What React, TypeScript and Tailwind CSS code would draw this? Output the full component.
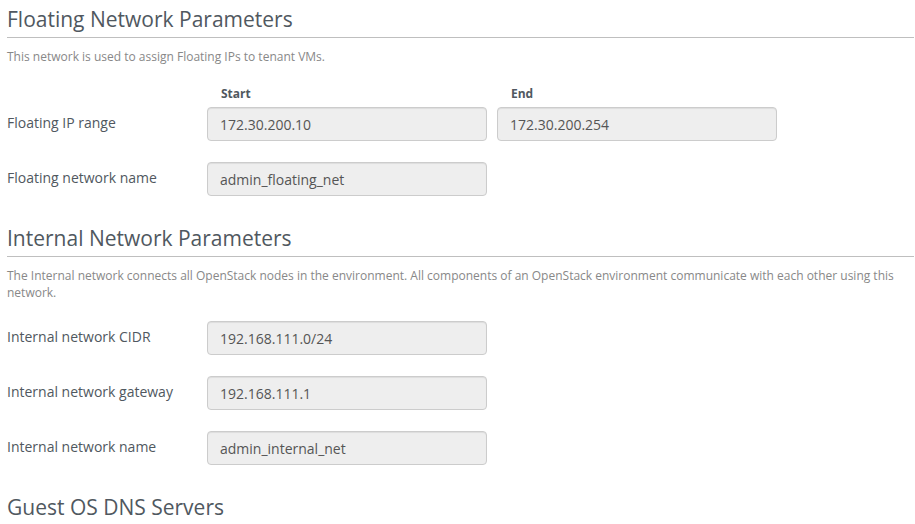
import React from "react";

type Field = { id: string; label: string; value: string };

const inputClass =
  "block h-[34px] w-[280px] rounded border border-[#cccccc] bg-[#eeeeee] px-3 text-sm text-[#555555] shadow-[inset_0_1px_1px_rgba(0,0,0,0.075)] outline-none";
const labelClass = "w-[200px] shrink-0 text-sm leading-5 pb-[3px]";

function Heading({ children }: { children: React.ReactNode }) {
  return (
    <h3 className="border-b border-[#bfbfbf] pb-1 text-[21px] leading-7 font-normal">{children}</h3>
  );
}

function Row({ id, label, value }: Field) {
  return (
    <div className="flex items-center">
      <label htmlFor={id} className={labelClass}>{label}</label>
      <input id={id} type="text" readOnly defaultValue={value} className={inputClass} />
    </div>
  );
}

const internalFields: Field[] = [
  { id: "cidr", label: "Internal network CIDR", value: "192.168.111.0/24" },
  { id: "gateway", label: "Internal network gateway", value: "192.168.111.1" },
  { id: "internal-name", label: "Internal network name", value: "admin_internal_net" },
];

export default function App() {
  return (
    <main className="h-screen overflow-hidden bg-white pt-[5px] pr-px pl-[7px] font-['Open_Sans',sans-serif] text-[#505860]">
      <section>
        <Heading>Floating Network Parameters</Heading>
        <p className="mt-[10px] text-xs leading-[17px] text-[#888888]">
          This network is used to assign Floating IPs to tenant VMs.
        </p>
        <div className="mt-5 flex gap-[10px] pl-[200px] text-xs leading-[17px] font-bold">
          <span className="w-[280px] pl-[14px]">Start</span>
          <span className="w-[280px] pl-[14px]">End</span>
        </div>
        <div className="mt-[5px] flex items-center">
          <label htmlFor="range-start" className={labelClass}>Floating IP range</label>
          <div className="flex gap-[10px]">
            <input id="range-start" type="text" readOnly defaultValue="172.30.200.10" className={inputClass} />
            <input aria-label="Floating IP range end" type="text" readOnly defaultValue="172.30.200.254" className={inputClass} />
          </div>
        </div>
        <div className="mt-[21px]">
          <Row id="floating-name" label="Floating network name" value="admin_floating_net" />
        </div>
      </section>
      <section className="mt-7">
        <Heading>Internal Network Parameters</Heading>
        <p className="mt-[10px] text-xs leading-[17px] text-[#888888]">
          The Internal network connects all OpenStack nodes in the environment. All components of an OpenStack environment communicate with each other using this network.
        </p>
        <div className="mt-5 flex flex-col gap-[21px]">
          {internalFields.map((field) => (
            <Row key={field.id} {...field} />
          ))}
        </div>
      </section>
      <section className="mt-7">
        <Heading>Guest OS DNS Servers</Heading>
      </section>
    </main>
  );
}
